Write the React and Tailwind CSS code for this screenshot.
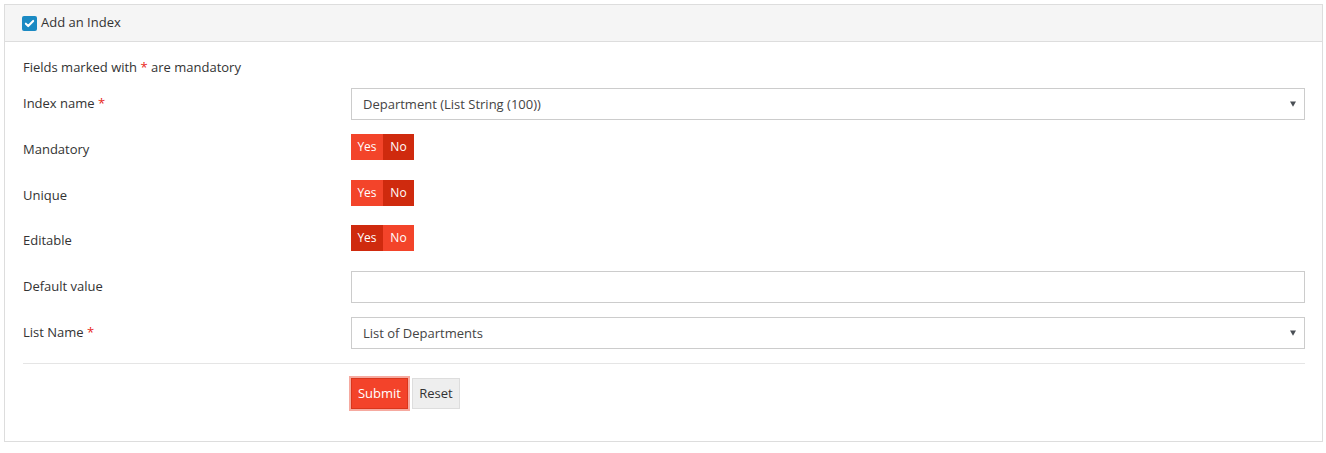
import { useState } from "react"

function Toggle({ value, onChange }) {
  const on = "bg-[#f3442a]"
  const off = "bg-[#cf2a0e]"
  return (
    <div className="flex h-[26px] text-[12px] text-white leading-none">
      <button type="button" onClick={() => onChange(true)} className={`w-[32px] h-full flex items-center justify-center ${value ? off : on}`}>
        Yes
      </button>
      <button type="button" onClick={() => onChange(false)} className={`w-[31px] h-full flex items-center justify-center ${value ? on : off}`}>
        No
      </button>
    </div>
  )
}

function Select({ value }) {
  return (
    <div className="relative flex-1 h-[32px] border border-[#cccccc] bg-white flex items-center pl-[11px] pt-[1px] text-[13px] text-[#444]">
      {value}
      <svg className="absolute right-[8px] top-1/2 -translate-y-1/2 w-[6px] h-[6px]" viewBox="0 0 6 6" fill="#4a4f55">
        <path d="M0 0.5h6L3 5.8z" />
      </svg>
    </div>
  )
}

export default function App() {
  const [checked, setChecked] = useState(true)
  const [mandatory, setMandatory] = useState(false)
  const [unique, setUnique] = useState(false)
  const [editable, setEditable] = useState(true)

  return (
    <div className="w-[1326px] h-[453px] bg-white p-[4px] text-[#333] text-[13px]" style={{ fontFamily: '"Open Sans", "Noto Sans", sans-serif' }}>
      <div className="w-[1319px] border border-[#dddddd]">
        {/* header */}
        <div className="h-[37px] bg-[#f5f5f5] border-b border-[#dddddd] flex items-center pl-[17px]">
          <button type="button" onClick={() => setChecked(c => !c)} className="w-[15px] h-[15px] rounded-[2px] bg-[#1b8ac3] flex items-center justify-center mr-[4px]">
            {checked && (
              <svg className="w-[11px] h-[11px]" viewBox="0 0 12 12" fill="none" stroke="white" strokeWidth={2.2}>
                <path d="M2 6.2l2.6 2.6L10 3.2" strokeLinecap="round" strokeLinejoin="round" />
              </svg>
            )}
          </button>
          <span>Add an Index</span>
        </div>

        {/* body */}
        <div className="pl-[18px] pr-[17px] pt-[16px] pb-[32px]">
          <p className="leading-[18px]">
            Fields marked with <span className="text-[#e8261a]">*</span> are mandatory
          </p>

          <div className="flex items-center h-[32px] mt-[12px]">
            <label className="w-[328px]">Index name <span className="text-[#e8261a]">*</span></label>
            <Select value="Department (List String (100))" />
          </div>

          <div className="flex items-center h-[26px] mt-[14px]">
            <label className="w-[328px] pt-[5px]">Mandatory</label>
            <Toggle value={mandatory} onChange={setMandatory} />
          </div>

          <div className="flex items-center h-[26px] mt-[20px]">
            <label className="w-[328px] pt-[5px]">Unique</label>
            <Toggle value={unique} onChange={setUnique} />
          </div>

          <div className="flex items-center h-[26px] mt-[19px]">
            <label className="w-[328px] pt-[5px]">Editable</label>
            <Toggle value={editable} onChange={setEditable} />
          </div>

          <div className="flex items-center h-[32px] mt-[20px]">
            <label className="w-[328px]">Default value</label>
            <input type="text" className="flex-1 h-[32px] border border-[#cccccc] bg-white px-[11px] outline-none" />
          </div>

          <div className="flex items-center h-[32px] mt-[14px]">
            <label className="w-[328px]">List Name <span className="text-[#e8261a]">*</span></label>
            <Select value="List of Departments" />
          </div>

          <div className="border-t border-[#e5e5e5] mt-[14px]" />

          <div className="flex gap-[4px] pl-[328px] mt-[14px]">
            <button type="button" className="h-[31px] w-[57px] bg-[#f3432a] border border-[#d9361c] text-white shadow-[0_0_0_2px_#f6aaa0]">
              Submit
            </button>
            <button type="button" className="h-[31px] w-[48px] bg-[#eeeeee] border border-[#dddddd] text-[#333]">
              Reset
            </button>
          </div>
        </div>
      </div>
    </div>
  )
}
